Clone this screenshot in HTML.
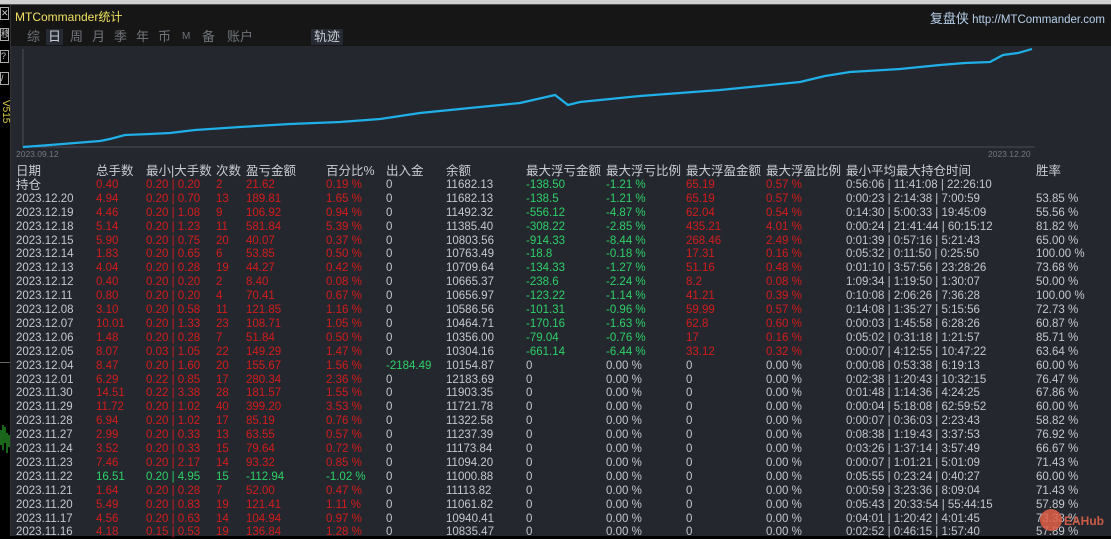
<!DOCTYPE html>
<html><head><meta charset="utf-8"><style>
*{margin:0;padding:0;box-sizing:border-box}
body{width:1111px;height:536px;background:#000;overflow:hidden;position:relative;font-family:"Liberation Sans","Noto Sans CJK SC",sans-serif;font-size:11.5px;color:#c4c8ce}
.top{position:absolute;left:0;top:0;width:1111px;height:5px;background:#d0d0d0;border-bottom:1px solid #555}
.left{position:absolute;left:0;top:5px;width:11px;height:531px;background:#000;border-right:1px solid #333}
.lb{position:absolute;left:0;width:9px;height:13px;border:1px solid #aaa;color:#ccc;font-size:9px;line-height:11px;overflow:hidden}
.panel{position:absolute;left:11px;top:5px;width:1100px;height:531px;background:#24272e}
.hdr{position:absolute;left:11px;top:5px;width:1100px;height:41px;background:#161616}
.title{position:absolute;left:15px;top:8px;color:#f0e060;font-size:12px}
.site{position:absolute;right:6px;top:8px;color:#b8d0ec;font-size:11.5px}
.site b{font-weight:normal;font-size:13px}
.tabs{position:absolute;top:29px;font-size:13px;color:#6a6e74}
.tab{position:absolute;top:29px;font-size:13px;color:#70747a;height:16px;line-height:16px}
.sel{background:#262b33;color:#c8ccd2;padding:0 2px}
.r{position:absolute;left:0;width:1111px;height:14px;line-height:14px;white-space:nowrap}
.r span{position:absolute}
.a{left:16px}.b{left:96px}.c{left:146px}.d{left:216px}.e{left:246px}.f{left:326px}.g{left:386px}.h{left:446px}.i{left:526px}.j{left:606px}.k{left:686px}.l{left:766px}.m{left:846px}.n{left:1036px}
.R{color:#d41c1c}.G{color:#2ed068}
.hd{font-size:12.5px;color:#c8ccd2}
</style></head><body>
<div class="top"></div>
<div class="left">
<div class="lb" style="top:2px">✕</div>
<div class="lb" style="top:23px">移</div>
<div class="lb" style="top:45px">?</div>
<div class="lb" style="top:67px">/</div>
<div style="position:absolute;left:0;top:95px;color:#e0d040;font-size:10px;writing-mode:vertical-lr;">V515</div>
<div style="position:absolute;left:0;top:357px;width:10px;height:1px;background:#666"></div>
<svg style="position:absolute;left:0;top:410px" width="11" height="40"><path d="M1 15V30M3 10V35M5 12V28M7 18V38M9 20V32" stroke="#3c3" stroke-width="1"/></svg>
</div>
<div class="panel"></div>
<div class="hdr"></div>
<div class="title">MTCommander统计</div>
<div class="site"><b>复盘侠</b> http://MTCommander.com</div>
<div class="tab" style="left:27px">综</div>
<div class="tab sel" style="left:46px">日</div>
<div class="tab" style="left:70px">周</div>
<div class="tab" style="left:92px">月</div>
<div class="tab" style="left:114px">季</div>
<div class="tab" style="left:136px">年</div>
<div class="tab" style="left:158px">币</div>
<div class="tab" style="left:182px;font-size:10px">M</div>
<div class="tab" style="left:202px">备</div>
<div class="tab" style="left:227px">账户</div>
<div class="tab sel" style="left:311px;padding:0 3px">轨迹</div>
<svg style="position:absolute;left:0;top:0" width="1111" height="160">
<path d="M23 49V147H1035" stroke="#4a4e56" fill="none" stroke-width="1"/>
<polyline fill="none" stroke="#20b0e8" stroke-width="2.2" points="23,147 50,145 75,143 100,141 110,139 125,135 150,134 170,133 195,130 240,127 290,124 340,122 380,119 420,113 470,108 520,103 555,95 568,105 580,102 600,100 640,96 680,93 720,90 760,86 800,82 825,76 850,72 900,69 940,65 965,63 990,62 1003,55 1018,53 1032,49"/>
<text x="16" y="157" fill="#767a80" font-size="8.5" font-family="Liberation Sans">2023.09.12</text>
<text x="988" y="157" fill="#767a80" font-size="8.5" font-family="Liberation Sans">2023.12.20</text>
</svg>
<div class="r hd" style="top:164px"><span class="a">日期</span><span class="b">总手数</span><span class="c">最小|大手数</span><span class="d">次数</span><span class="e">盈亏金额</span><span class="f">百分比%</span><span class="g">出入金</span><span class="h">余额</span><span class="i">最大浮亏金额</span><span class="j">最大浮亏比例</span><span class="k">最大浮盈金额</span><span class="l">最大浮盈比例</span><span class="m">最小平均最大持仓时间</span><span class="n">胜率</span></div>
<div class="r" style="top:177.9px"><span class="a hd">持仓</span><span class="b R">0.40</span><span class="c R">0.20 | 0.20</span><span class="d R">2</span><span class="e R">21.62</span><span class="f R">0.19 %</span><span class="g">0</span><span class="h">11682.13</span><span class="i G">-138.50</span><span class="j G">-1.21 %</span><span class="k R">65.19</span><span class="l R">0.57 %</span><span class="m">0:56:06 | 11:41:08 | 22:26:10</span></div>
<div class="r" style="top:191.8px"><span class="a">2023.12.20</span><span class="b R">4.94</span><span class="c R">0.20 | 0.70</span><span class="d R">13</span><span class="e R">189.81</span><span class="f R">1.65 %</span><span class="g">0</span><span class="h">11682.13</span><span class="i G">-138.5</span><span class="j G">-1.21 %</span><span class="k R">65.19</span><span class="l R">0.57 %</span><span class="m">0:00:23 | 2:14:38 | 7:00:59</span><span class="n">53.85 %</span></div>
<div class="r" style="top:205.7px"><span class="a">2023.12.19</span><span class="b R">4.46</span><span class="c R">0.20 | 1.08</span><span class="d R">9</span><span class="e R">106.92</span><span class="f R">0.94 %</span><span class="g">0</span><span class="h">11492.32</span><span class="i G">-556.12</span><span class="j G">-4.87 %</span><span class="k R">62.04</span><span class="l R">0.54 %</span><span class="m">0:14:30 | 5:00:33 | 19:45:09</span><span class="n">55.56 %</span></div>
<div class="r" style="top:219.6px"><span class="a">2023.12.18</span><span class="b R">5.14</span><span class="c R">0.20 | 1.23</span><span class="d R">11</span><span class="e R">581.84</span><span class="f R">5.39 %</span><span class="g">0</span><span class="h">11385.40</span><span class="i G">-308.22</span><span class="j G">-2.85 %</span><span class="k R">435.21</span><span class="l R">4.01 %</span><span class="m">0:00:24 | 21:41:44 | 60:15:12</span><span class="n">81.82 %</span></div>
<div class="r" style="top:233.5px"><span class="a">2023.12.15</span><span class="b R">5.90</span><span class="c R">0.20 | 0.75</span><span class="d R">20</span><span class="e R">40.07</span><span class="f R">0.37 %</span><span class="g">0</span><span class="h">10803.56</span><span class="i G">-914.33</span><span class="j G">-8.44 %</span><span class="k R">268.46</span><span class="l R">2.49 %</span><span class="m">0:01:39 | 0:57:16 | 5:21:43</span><span class="n">65.00 %</span></div>
<div class="r" style="top:247.4px"><span class="a">2023.12.14</span><span class="b R">1.83</span><span class="c R">0.20 | 0.65</span><span class="d R">6</span><span class="e R">53.85</span><span class="f R">0.50 %</span><span class="g">0</span><span class="h">10763.49</span><span class="i G">-18.8</span><span class="j G">-0.18 %</span><span class="k R">17.31</span><span class="l R">0.16 %</span><span class="m">0:05:32 | 0:11:50 | 0:25:50</span><span class="n">100.00 %</span></div>
<div class="r" style="top:261.3px"><span class="a">2023.12.13</span><span class="b R">4.04</span><span class="c R">0.20 | 0.28</span><span class="d R">19</span><span class="e R">44.27</span><span class="f R">0.42 %</span><span class="g">0</span><span class="h">10709.64</span><span class="i G">-134.33</span><span class="j G">-1.27 %</span><span class="k R">51.16</span><span class="l R">0.48 %</span><span class="m">0:01:10 | 3:57:56 | 23:28:26</span><span class="n">73.68 %</span></div>
<div class="r" style="top:275.2px"><span class="a">2023.12.12</span><span class="b R">0.40</span><span class="c R">0.20 | 0.20</span><span class="d R">2</span><span class="e R">8.40</span><span class="f R">0.08 %</span><span class="g">0</span><span class="h">10665.37</span><span class="i G">-238.6</span><span class="j G">-2.24 %</span><span class="k R">8.2</span><span class="l R">0.08 %</span><span class="m">1:09:34 | 1:19:50 | 1:30:07</span><span class="n">50.00 %</span></div>
<div class="r" style="top:289.1px"><span class="a">2023.12.11</span><span class="b R">0.80</span><span class="c R">0.20 | 0.20</span><span class="d R">4</span><span class="e R">70.41</span><span class="f R">0.67 %</span><span class="g">0</span><span class="h">10656.97</span><span class="i G">-123.22</span><span class="j G">-1.14 %</span><span class="k R">41.21</span><span class="l R">0.39 %</span><span class="m">0:10:08 | 2:06:26 | 7:36:28</span><span class="n">100.00 %</span></div>
<div class="r" style="top:303px"><span class="a">2023.12.08</span><span class="b R">3.10</span><span class="c R">0.20 | 0.58</span><span class="d R">11</span><span class="e R">121.85</span><span class="f R">1.16 %</span><span class="g">0</span><span class="h">10586.56</span><span class="i G">-101.31</span><span class="j G">-0.96 %</span><span class="k R">59.99</span><span class="l R">0.57 %</span><span class="m">0:14:08 | 1:35:27 | 5:15:56</span><span class="n">72.73 %</span></div>
<div class="r" style="top:316.9px"><span class="a">2023.12.07</span><span class="b R">10.01</span><span class="c R">0.20 | 1.33</span><span class="d R">23</span><span class="e R">108.71</span><span class="f R">1.05 %</span><span class="g">0</span><span class="h">10464.71</span><span class="i G">-170.16</span><span class="j G">-1.63 %</span><span class="k R">62.8</span><span class="l R">0.60 %</span><span class="m">0:00:03 | 1:45:58 | 6:28:26</span><span class="n">60.87 %</span></div>
<div class="r" style="top:330.8px"><span class="a">2023.12.06</span><span class="b R">1.48</span><span class="c R">0.20 | 0.28</span><span class="d R">7</span><span class="e R">51.84</span><span class="f R">0.50 %</span><span class="g">0</span><span class="h">10356.00</span><span class="i G">-79.04</span><span class="j G">-0.76 %</span><span class="k R">17</span><span class="l R">0.16 %</span><span class="m">0:05:02 | 0:31:18 | 1:21:57</span><span class="n">85.71 %</span></div>
<div class="r" style="top:344.7px"><span class="a">2023.12.05</span><span class="b R">8.07</span><span class="c R">0.03 | 1.05</span><span class="d R">22</span><span class="e R">149.29</span><span class="f R">1.47 %</span><span class="g">0</span><span class="h">10304.16</span><span class="i G">-661.14</span><span class="j G">-6.44 %</span><span class="k R">33.12</span><span class="l R">0.32 %</span><span class="m">0:00:07 | 4:12:55 | 10:47:22</span><span class="n">63.64 %</span></div>
<div class="r" style="top:358.6px"><span class="a">2023.12.04</span><span class="b R">8.47</span><span class="c R">0.20 | 1.60</span><span class="d R">20</span><span class="e R">155.67</span><span class="f R">1.56 %</span><span class="g G">-2184.49</span><span class="h">10154.87</span><span class="i">0</span><span class="j">0.00 %</span><span class="k">0</span><span class="l">0.00 %</span><span class="m">0:00:08 | 0:53:38 | 6:19:13</span><span class="n">60.00 %</span></div>
<div class="r" style="top:372.5px"><span class="a">2023.12.01</span><span class="b R">6.29</span><span class="c R">0.22 | 0.85</span><span class="d R">17</span><span class="e R">280.34</span><span class="f R">2.36 %</span><span class="g">0</span><span class="h">12183.69</span><span class="i">0</span><span class="j">0.00 %</span><span class="k">0</span><span class="l">0.00 %</span><span class="m">0:02:38 | 1:20:43 | 10:32:15</span><span class="n">76.47 %</span></div>
<div class="r" style="top:386.4px"><span class="a">2023.11.30</span><span class="b R">14.51</span><span class="c R">0.22 | 3.38</span><span class="d R">28</span><span class="e R">181.57</span><span class="f R">1.55 %</span><span class="g">0</span><span class="h">11903.35</span><span class="i">0</span><span class="j">0.00 %</span><span class="k">0</span><span class="l">0.00 %</span><span class="m">0:01:48 | 1:14:36 | 4:24:25</span><span class="n">67.86 %</span></div>
<div class="r" style="top:400.3px"><span class="a">2023.11.29</span><span class="b R">11.72</span><span class="c R">0.20 | 1.02</span><span class="d R">40</span><span class="e R">399.20</span><span class="f R">3.53 %</span><span class="g">0</span><span class="h">11721.78</span><span class="i">0</span><span class="j">0.00 %</span><span class="k">0</span><span class="l">0.00 %</span><span class="m">0:00:04 | 5:18:08 | 62:59:52</span><span class="n">60.00 %</span></div>
<div class="r" style="top:414.2px"><span class="a">2023.11.28</span><span class="b R">6.94</span><span class="c R">0.20 | 1.02</span><span class="d R">17</span><span class="e R">85.19</span><span class="f R">0.76 %</span><span class="g">0</span><span class="h">11322.58</span><span class="i">0</span><span class="j">0.00 %</span><span class="k">0</span><span class="l">0.00 %</span><span class="m">0:00:07 | 0:36:03 | 2:23:43</span><span class="n">58.82 %</span></div>
<div class="r" style="top:428.1px"><span class="a">2023.11.27</span><span class="b R">2.99</span><span class="c R">0.20 | 0.33</span><span class="d R">13</span><span class="e R">63.55</span><span class="f R">0.57 %</span><span class="g">0</span><span class="h">11237.39</span><span class="i">0</span><span class="j">0.00 %</span><span class="k">0</span><span class="l">0.00 %</span><span class="m">0:08:38 | 1:19:43 | 3:37:53</span><span class="n">76.92 %</span></div>
<div class="r" style="top:442px"><span class="a">2023.11.24</span><span class="b R">3.52</span><span class="c R">0.20 | 0.33</span><span class="d R">15</span><span class="e R">79.64</span><span class="f R">0.72 %</span><span class="g">0</span><span class="h">11173.84</span><span class="i">0</span><span class="j">0.00 %</span><span class="k">0</span><span class="l">0.00 %</span><span class="m">0:03:26 | 1:37:14 | 3:57:49</span><span class="n">66.67 %</span></div>
<div class="r" style="top:455.9px"><span class="a">2023.11.23</span><span class="b R">7.46</span><span class="c R">0.20 | 2.17</span><span class="d R">14</span><span class="e R">93.32</span><span class="f R">0.85 %</span><span class="g">0</span><span class="h">11094.20</span><span class="i">0</span><span class="j">0.00 %</span><span class="k">0</span><span class="l">0.00 %</span><span class="m">0:00:07 | 1:01:21 | 5:01:09</span><span class="n">71.43 %</span></div>
<div class="r" style="top:469.8px"><span class="a">2023.11.22</span><span class="b G">16.51</span><span class="c G">0.20 | 4.95</span><span class="d G">15</span><span class="e G">-112.94</span><span class="f G">-1.02 %</span><span class="g">0</span><span class="h">11000.88</span><span class="i">0</span><span class="j">0.00 %</span><span class="k">0</span><span class="l">0.00 %</span><span class="m">0:05:55 | 0:23:24 | 0:40:27</span><span class="n">60.00 %</span></div>
<div class="r" style="top:483.7px"><span class="a">2023.11.21</span><span class="b R">1.64</span><span class="c R">0.20 | 0.28</span><span class="d R">7</span><span class="e R">52.00</span><span class="f R">0.47 %</span><span class="g">0</span><span class="h">11113.82</span><span class="i">0</span><span class="j">0.00 %</span><span class="k">0</span><span class="l">0.00 %</span><span class="m">0:00:59 | 3:23:36 | 8:09:04</span><span class="n">71.43 %</span></div>
<div class="r" style="top:497.6px"><span class="a">2023.11.20</span><span class="b R">5.49</span><span class="c R">0.20 | 0.83</span><span class="d R">19</span><span class="e R">121.41</span><span class="f R">1.11 %</span><span class="g">0</span><span class="h">11061.82</span><span class="i">0</span><span class="j">0.00 %</span><span class="k">0</span><span class="l">0.00 %</span><span class="m">0:05:43 | 20:33:54 | 55:44:15</span><span class="n">57.89 %</span></div>
<div class="r" style="top:511.5px"><span class="a">2023.11.17</span><span class="b R">4.56</span><span class="c R">0.20 | 0.63</span><span class="d R">14</span><span class="e R">104.94</span><span class="f R">0.97 %</span><span class="g">0</span><span class="h">10940.41</span><span class="i">0</span><span class="j">0.00 %</span><span class="k">0</span><span class="l">0.00 %</span><span class="m">0:04:01 | 1:20:42 | 4:01:45</span><span class="n">73.33 %</span></div>
<div class="r" style="top:525.4px"><span class="a">2023.11.16</span><span class="b R">4.18</span><span class="c R">0.15 | 0.53</span><span class="d R">19</span><span class="e R">136.84</span><span class="f R">1.28 %</span><span class="g">0</span><span class="h">10835.47</span><span class="i">0</span><span class="j">0.00 %</span><span class="k">0</span><span class="l">0.00 %</span><span class="m">0:02:52 | 0:46:15 | 1:57:40</span><span class="n">57.89 %</span></div>
<div style="position:absolute;left:1040px;top:509px;width:22px;height:22px;border-radius:50%;background:#e06048;opacity:.85"></div>
<div style="position:absolute;left:1064px;top:514px;color:#e06048;font-weight:bold;font-size:12px;opacity:.9">EAHub</div>
</body></html>
